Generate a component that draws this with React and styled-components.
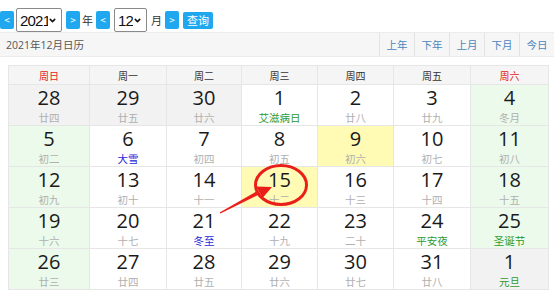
import React from 'react';
import styled, { createGlobalStyle } from 'styled-components';
import { ChevronDown } from 'lucide-react';

const GlobalStyle = createGlobalStyle`
    html, body {
        margin: 0;
        padding: 0;
        background: #fff;
        font-family: 'Open Sans', 'Noto Sans CJK SC', sans-serif;
    }
`;

const Page = styled.div`
    position: relative;
    width: 554px;
    height: 293px;
    overflow: hidden;
`;

const Toolbar = styled.div`
    display: flex;
    align-items: center;
    gap: 2px;
    height: 24px;
    padding-top: 8px;
`;

const NavButton = styled.button`
    width: ${props => props.$wide ? "30px" : "14px"};
    height: ${props => props.$wide ? "17px" : "18px"};
    padding: 0;
    margin-left: ${props => props.$ml || 0}px;
    border: none;
    border-radius: 2px;
    background: #1fa8ef;
    color: #fff;
    font-family: 'Noto Sans CJK SC', sans-serif;
    font-size: ${props => props.$wide ? "11px" : "10px"};
    line-height: 1;
`;

const SelectBox = styled.label`
    display: flex;
    align-items: center;
    justify-content: space-between;
    box-sizing: border-box;
    width: ${props => props.$w}px;
    height: 24px;
    margin-left: ${props => props.$ml || 0}px;
    padding: 0 4px 0 3px;
    border: 1px solid #8a8a8a;
    border-radius: 2px;
    background: #fff;
    color: #111;

    svg {
        flex-shrink: 0;
    }
`;

const Select = styled.select`
    appearance: none;
    min-width: 0;
    border: none;
    outline: none;
    background: transparent;
    padding: 0;
    font-family: 'Liberation Sans', sans-serif;
    font-size: 15px;
    letter-spacing: -0.8px;
    color: #111;
`;

const Label = styled.span`
    font-size: 11px;
    color: #333;
    margin: 0 ${props => props.$mr || 0}px 0 ${props => props.$ml || 0}px;
`;

const TitleBar = styled.div`
    display: flex;
    align-items: stretch;
    height: 23px;
    background: #f6f6f6;
    border-top: 1px solid #ececec;
    border-bottom: 1px solid #ececec;
`;

const Title = styled.div`
    flex: 1;
    display: flex;
    align-items: center;
    padding-left: 6px;
    font-size: 10.5px;
    color: #555;
`;

const BarLink = styled.div`
    width: 34px;
    display: flex;
    align-items: center;
    justify-content: center;
    border-left: 1px solid #e3e3e3;
    font-size: 10.5px;
    color: #4a86c0;
`;

const Grid = styled.div`
    display: grid;
    grid-template-columns: 81px 77px 75px 76px 76px 77px 78px;
    margin: 8px 0 0 8px;
    border-left: 1px solid #e6e6e6;
    border-top: 1px solid #e6e6e6;
    width: 540px;
`;

const HeadCell = styled.div`
    height: 18px;
    display: flex;
    align-items: center;
    justify-content: center;
    background: #f5f5f5;
    border-right: 1px solid #e6e6e6;
    border-bottom: 1px solid #e6e6e6;
    font-size: 10px;
    color: ${props => props.$red ? "#e42121" : "#333"};
`;

const bgFor = kind => ({
    other: "#f2f2f2",
    weekend: "#ebfaea",
    today: "#fffbb5",
}[kind] || "#fff");

const DayCell = styled.div`
    height: 41px;
    display: flex;
    flex-direction: column;
    align-items: center;
    padding-top: 1px;
    box-sizing: border-box;
    background: ${props => bgFor(props.$kind)};
    border-right: 1px solid #e6e6e6;
    border-bottom: 1px solid #e6e6e6;
`;

const DayNum = styled.div`
    font-size: 20px;
    line-height: 24px;
    color: #1a1a1a;
`;

const Lunar = styled.div`
    font-family: 'Noto Sans CJK SC', sans-serif;
    font-size: 10.5px;
    line-height: 15px;
    color: ${props => props.$tone === "green" ? "#2e9a2e" : props.$tone === "blue" ? "#2727d8" : "#b0b0b0"};
`;

const Overlay = styled.svg`
    position: absolute;
    top: 0;
    left: 0;
    pointer-events: none;
`;

const heads = ["周日", "周一", "周二", "周三", "周四", "周五", "周六"];

// [day, lunar text, tone, kind]
const weeks = [
    [[28, "廿四", "", "other"], [29, "廿五", "", "other"], [30, "廿六", "", "other"], [1, "艾滋病日", "green"], [2, "廿八"], [3, "廿九"], [4, "冬月", "", "weekend"]],
    [[5, "初二", "", "weekend"], [6, "大雪", "blue"], [7, "初四"], [8, "初五"], [9, "初六", "", "today"], [10, "初七"], [11, "初八", "", "weekend"]],
    [[12, "初九", "", "weekend"], [13, "初十"], [14, "十一"], [15, "十二", "", "today"], [16, "十三"], [17, "十四"], [18, "十五", "", "weekend"]],
    [[19, "十六", "", "weekend"], [20, "十七"], [21, "冬至", "blue"], [22, "十九"], [23, "二十"], [24, "平安夜", "green"], [25, "圣诞节", "green", "weekend"]],
    [[26, "廿三", "", "weekend"], [27, "廿四"], [28, "廿五"], [29, "廿六"], [30, "廿七"], [31, "廿八"], [1, "元旦", "green", "other"]],
];

function Picker({ w, ml, value }) {
    return (
        <SelectBox $w={w} $ml={ml}>
            <Select defaultValue={value}>
                <option>{value}</option>
            </Select>
            <ChevronDown size={9} strokeWidth={4} />
        </SelectBox>
    );
}

function App() {
    return (
        <Page>
            <GlobalStyle />
            <Toolbar>
                <NavButton>&lt;</NavButton>
                <Picker w={46} value="2021" />
                <NavButton $ml={2}>&gt;</NavButton>
                <Label>年</Label>
                <NavButton $ml={1}>&lt;</NavButton>
                <Picker w={33} ml={2} value="12" />
                <Label $ml={2} $mr={1}>月</Label>
                <NavButton>&gt;</NavButton>
                <NavButton $wide $ml={2}>查询</NavButton>
            </Toolbar>
            <TitleBar>
                <Title>2021年12月日历</Title>
                {["上年", "下年", "上月", "下月", "今日"].map(t => (
                    <BarLink key={t}>{t}</BarLink>
                ))}
            </TitleBar>
            <Grid>
                {heads.map((h, i) => (
                    <HeadCell key={h} $red={i === 0 || i === 6}>{h}</HeadCell>
                ))}
                {weeks.flat().map(([day, lunar, tone, kind], i) => (
                    <DayCell key={i} $kind={kind}>
                        <DayNum>{day}</DayNum>
                        <Lunar $tone={tone}>{lunar}</Lunar>
                    </DayCell>
                ))}
            </Grid>
            <Overlay width="554" height="293" viewBox="0 0 554 293">
                <ellipse cx="281" cy="185" rx="25.5" ry="19.5" fill="none" stroke="#ea1f1a" strokeWidth="3" />
                <polygon points="219.6,212.4 220.4,213.6 260,194 258,190.5" fill="#ea1f1a" />
                <polygon points="272,187 256,186.5 262.5,198" fill="#ea1f1a" />
            </Overlay>
        </Page>
    );
}

export default App;
